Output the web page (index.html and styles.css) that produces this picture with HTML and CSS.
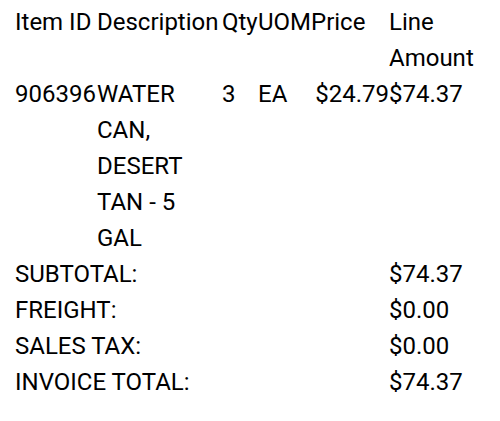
FILE: index.html
```html
<!DOCTYPE html>
<html>
<head>
<meta charset="utf-8">
<link rel="stylesheet" href="styles.css">
</head>
<body>
<table class="invoice">
  <colgroup>
    <col class="c-id">
    <col class="c-desc">
    <col class="c-qty">
    <col class="c-uom">
    <col class="c-price">
    <col class="c-amt">
  </colgroup>
  <thead>
    <tr>
      <th>Item ID</th>
      <th>Description</th>
      <th>Qty</th>
      <th>UOM</th>
      <th>Price</th>
      <th>Line Amount</th>
    </tr>
  </thead>
  <tbody>
    <tr>
      <td>906396</td>
      <td>WATER CAN, DESERT TAN - 5 GAL</td>
      <td>3</td>
      <td>EA</td>
      <td class="num">$24.79</td>
      <td>$74.37</td>
    </tr>
  </tbody>
  <tfoot>
    <tr>
      <td colspan="5">SUBTOTAL:</td>
      <td>$74.37</td>
    </tr>
    <tr>
      <td colspan="5">FREIGHT:</td>
      <td>$0.00</td>
    </tr>
    <tr>
      <td colspan="5">SALES TAX:</td>
      <td>$0.00</td>
    </tr>
    <tr>
      <td colspan="5">INVOICE TOTAL:</td>
      <td>$74.37</td>
    </tr>
  </tfoot>
</table>
</body>
</html>
```
FILE: styles.css
```css
html, body {
  margin: 0;
  background: #fff;
}
body {
  padding: 4px 15px 0 15px;
  font-family: Roboto, "Noto Sans", sans-serif;
  font-size: 24px;
  line-height: 36px;
  color: #000;
}
.invoice {
  border-collapse: collapse;
  border-spacing: 0;
  table-layout: fixed;
  width: 470px;
}
.invoice th,
.invoice td {
  padding: 0;
  text-align: left;
  vertical-align: top;
  font-weight: 400;
}
.invoice td.num {
  text-align: right;
}
.c-id { width: 82px; }
.c-desc { width: 125px; }
.c-qty { width: 36px; }
.c-uom { width: 53px; }
.c-price { width: 78px; }
.c-amt { width: 96px; }
```
